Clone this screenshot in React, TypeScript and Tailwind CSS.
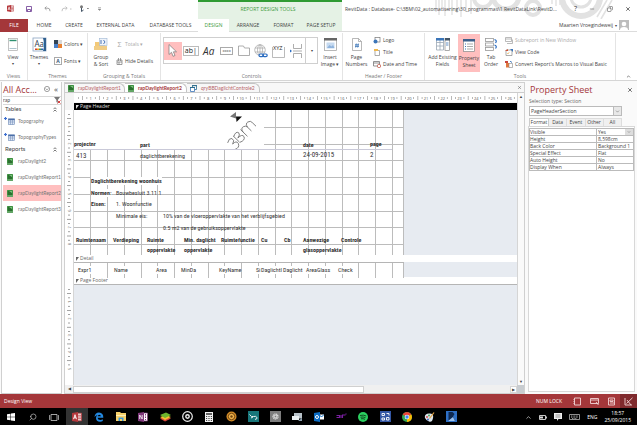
import type { ReactNode } from "react";
import { ChevronUp, ChevronDown, Search, X, Minus, Copy } from "lucide-react";

const STEP = 16.76;

/* ---------- small building blocks ---------- */

function Group({ label, className, children }: { label: string; className: string; children: ReactNode }) {
  return (
    <section className={`flex shrink-0 flex-col border-r border-[#e4e4e4] ${className}`}>
      <div className="flex flex-1 items-start">{children}</div>
      <div className="h-[8px] text-center leading-[8px] text-[#777]">{label}</div>
    </section>
  );
}

function Big({ icon, lines, className = "", arrow = false }: { icon: ReactNode; lines: string[]; className?: string; arrow?: boolean }) {
  return (
    <button className={`flex h-[38px] flex-col items-center whitespace-nowrap pt-[3px] leading-[7px] ${className}`}>
      <span className="mb-[2px] flex h-[16px] items-center">{icon}</span>
      {lines.map((l) => (
        <span key={l}>{l}</span>
      ))}
      {arrow && <span className="text-[4px] leading-[6px]">▾</span>}
    </button>
  );
}

function Small({ icon, text, muted = false }: { icon: ReactNode; text: string; muted?: boolean }) {
  return (
    <button className={`flex h-[12px] items-center gap-[2px] whitespace-nowrap ${muted ? "text-[#aaa]" : ""}`}>
      {icon}
      <span>{text}</span>
    </button>
  );
}

function ReportIcon() {
  return (
    <svg width="6" height="7" viewBox="0 0 6 7" className="shrink-0">
      <rect width="6" height="7" rx="0.5" fill="#3f9142" />
      <rect x="1" y="1" width="4" height="4" fill="#2c7030" />
      <path d="M2 1h3v2z" fill="#7cc47e" />
      <path d="M0 6h6" stroke="#86b988" />
    </svg>
  );
}

function TableIcon() {
  return (
    <svg width="11" height="8" viewBox="0 0 11 8" className="shrink-0">
      <path d="M0 1.5h3M1.5 0v3" stroke="#3d6fd0" strokeWidth="1.2" />
      <rect x="4.5" y="2" width="6" height="5.5" fill="#dce6f5" stroke="#6b87b5" strokeWidth="0.6" />
      <rect x="4.3" y="1.6" width="6.4" height="1.6" fill="#4a6ea8" />
      <path d="M4.5 5h6M6.5 3v4.5M8.5 3v4.5" stroke="#6b87b5" strokeWidth="0.5" />
    </svg>
  );
}

function AccessIcon({ size }: { size: number }) {
  return (
    <svg width={size} height={size} viewBox="0 0 10 10">
      <path d="M5 1.2h4.5v7.6H5z" fill="#fff" stroke="#b5383c" strokeWidth="0.8" />
      <path d="M6 3.2h3M6 5h3M6 6.8h3" stroke="#b5383c" strokeWidth="0.9" />
      <path d="M0 1l6-1v10l-6-1z" fill="#b5383c" />
      <path d="M1.5 7.2L3 2.7l1.5 4.5M2 5.8h2" stroke="#fff" strokeWidth="0.9" fill="none" />
    </svg>
  );
}

/* ---------- title bar ---------- */

function TitleArt() {
  return (
    <svg className="pointer-events-none absolute right-0 top-0" width="220" height="19" viewBox="417 0 220 19" fill="none">
      <g stroke="#e2e2e2">
        <path d="M436 0v12M439 0v15M442 0v9M445 0v16M449 0v11M452 0v15M457 0v13M461 0v17M466 0v12M471 0v14" strokeWidth="1.4" />
        <circle cx="483" cy="-2" r="9" strokeWidth="4" />
        <circle cx="506" cy="-4" r="13" strokeWidth="5" />
        <circle cx="533" cy="8" r="7" strokeWidth="4" />
        <path d="M552 0v4M556 0v6M560 0v5M564 0v7" strokeWidth="1.4" />
        <circle cx="581" cy="-3" r="19" strokeWidth="6" />
        <path d="M581 -3m-10 0a10 10 0 0 0 20 0" strokeWidth="3" />
        <path d="M607 0l-10 17M612 0l-11 19M602 0l-4 8" strokeWidth="1.6" />
      </g>
    </svg>
  );
}

function RibbonTab({ text, className }: { text: string; className: string }) {
  return (
    <button role="tab" className={`h-[13px] shrink-0 whitespace-nowrap text-center ${className}`}>
      {text}
    </button>
  );
}

function Header() {
  return (
    <header className="relative flex h-[32px] border-b border-[#dcdcdc]">
      <TitleArt />
      <div className="w-[198px] shrink-0">
        <div className="flex h-[19px] items-center pb-[2px] pl-[7px]">
          <AccessIcon size={7} />
          <svg className="ml-[12px]" width="6" height="6" viewBox="0 0 6 6" fill="none" stroke="#7b4f9d" strokeWidth="0.9">
            <path d="M.5 .5h5v5h-5zM1.5 5.5v-2h3v2" />
          </svg>
          <svg className="ml-[12px]" width="7" height="6" viewBox="0 0 7 6" fill="none" stroke="#999" strokeWidth="0.9">
            <path d="M2.5 .5L.8 2.2l1.7 1.6M1 2.2h3q2 0 2 3" />
          </svg>
          <svg className="ml-[10px]" width="11" height="6" viewBox="0 0 11 6" fill="none" stroke="#bbb" strokeWidth="0.9">
            <path d="M4.5 .5l1.7 1.7L4.5 3.8M6 2.2h-3q-2 0-2 3M9 3h1.5" />
          </svg>
          <svg className="ml-[7px]" width="10" height="7" viewBox="0 0 10 7" fill="none">
            <circle cx="2.5" cy="1.8" r="1.5" fill="#777" />
            <path d="M2.5 3v3.5l2-1.5" stroke="#456" />
            <path d="M8 3.5h1.8" stroke="#888" />
          </svg>
          <svg className="ml-[9px]" width="3" height="4" viewBox="0 0 3 4"><path d="M0 .5h3M0 2l1.5 1.5L3 2z" stroke="#888" strokeWidth="0.5" fill="#888" /></svg>
        </div>
        <div role="tablist" className="flex">
          <button className="h-[13px] w-[28px] bg-[#a4373a] text-white">FILE</button>
          <RibbonTab text="HOME" className="w-[32px]" />
          <RibbonTab text="CREATE" className="w-[28px]" />
          <RibbonTab text="EXTERNAL DATA" className="w-[55px]" />
          <RibbonTab text="DATABASE TOOLS" className="w-[55px]" />
        </div>
      </div>
      <div className="w-[144px] shrink-0 border-t-2 border-[#2f9b33] bg-[#e5f2e5]">
        <div className="h-[17px] pr-[4px] text-center leading-[14px] text-[#3d9b41]">REPORT DESIGN TOOLS</div>
        <div role="tablist" className="flex">
          <RibbonTab text="DESIGN" className="w-[31px] bg-white text-[#3d9b41]" />
          <RibbonTab text="ARRANGE" className="w-[38px]" />
          <RibbonTab text="FORMAT" className="w-[33px]" />
          <RibbonTab text="PAGE SETUP" className="w-[42px]" />
        </div>
      </div>
      <div className="relative min-w-0 flex-1">
        <div className="flex h-[19px] items-center">
          <div className="w-[218px] truncate pl-[3px]">
            RevitData : Database- C:\3BM\02_automatisering\30_programmas\1 RevitDataLink\RevitD...
          </div>
          <div className="ml-auto flex items-center gap-[12px] pb-[2px] pr-[6px] text-[#444]">
            <button aria-label="Help" className="text-[7px]">?</button>
            <button aria-label="Minimize"><Minus size={6} /></button>
            <button aria-label="Restore"><Copy size={6} className="-scale-x-100" /></button>
            <button aria-label="Close"><X size={6} strokeWidth={3} /></button>
          </div>
        </div>
        <div className="flex h-[12px] items-center justify-end gap-[2px] pr-[8px]">
          <span>Maarten Vroegindeweij</span>
          <span className="text-[4px]">▾</span>
          <svg width="10" height="10" viewBox="0 0 10 10">
            <rect width="10" height="10" fill="#bdbdbd" />
            <circle cx="5" cy="4" r="2.3" fill="#fff" />
            <path d="M1 10q0-3 4-3t4 3z" fill="#fff" />
          </svg>
        </div>
      </div>
    </header>
  );
}

/* ---------- ribbon ---------- */

function Tool({ label, className = "w-[18px]", children }: { label: string; className?: string; children: ReactNode }) {
  return (
    <button aria-label={label} className={`flex h-[18px] items-center justify-center ${className}`}>
      {children}
    </button>
  );
}

function Ribbon() {
  return (
    <div className="flex h-[49px] border-b border-[#d5d5d5] pt-[1px] leading-[7px]">
      <Group label="Views" className="w-[28px]">
        <Big
          className="w-[26px]"
          arrow
          lines={["View"]}
          icon={
            <svg width="10" height="13" viewBox="0 0 10 13" fill="#fff">
              <rect x=".5" y=".5" width="9" height="12" stroke="#aaa" strokeWidth="0.7" />
              <path d="M1.5 2.5h7" stroke="#2f9070" strokeWidth="1.4" />
              <path d="M1.5 10.5h7" stroke="#8ab" strokeWidth="0.7" />
            </svg>
          }
        />
      </Group>
      <Group label="Themes" className="w-[60px]">
        <Big
          className="w-[22px]"
          arrow
          lines={["Themes"]}
          icon={
            <svg width="15" height="15" viewBox="0 0 15 15" fill="none">
              <rect x="1" y="1" width="13" height="13" fill="#fff" stroke="#8aa4c0" strokeWidth="0.8" />
              <path d="M11 1h3v13h-3q2-6 0-13z" fill="#2f5f8f" />
              <text x="2.5" y="9.5" fontSize="8" fill="#345" className="font-[Noto_Sans]">Aa</text>
              <path d="M3 12.2h2" stroke="#d04030" strokeWidth="1.5" /><path d="M5 12.2h2" stroke="#f0a020" strokeWidth="1.5" /><path d="M7 12.2h2" stroke="#40a050" strokeWidth="1.5" /><path d="M9 12.2h2" stroke="#3060b0" strokeWidth="1.5" />
            </svg>
          }
        />
        <div className="flex flex-col gap-[5px] pl-[4px] pt-[5px]">
          <Small
            text="Colors ▾"
            icon={
              <svg width="8" height="8" viewBox="0 0 8 8"><rect width="4" height="4" fill="#345" /><rect x="4" width="4" height="4" fill="#d8d8d8" /><rect y="4" width="4" height="4" fill="#4a80c8" /><rect x="4" y="4" width="4" height="4" fill="#e88030" /></svg>
            }
          />
          <Small text="Fonts ▾" icon={<span className="flex h-[8px] w-[8px] items-center justify-center border border-[#aaa] font-bold text-[#357]">A</span>} />
        </div>
      </Group>
      <Group label="Grouping & Totals" className="w-[73px]">
        <Big
          className="w-[26px]"
          lines={["Group", "& Sort"]}
          icon={
            <svg width="14" height="13" viewBox="0 0 14 13">
              <path d="M1 4h4l1 1h5v3H1z" fill="#f3c978" /><path d="M0 8h13v4H0z" fill="#f1cd85" />
              <rect x="5.5" y=".5" width="7.5" height="7" fill="#eef3fa" stroke="#9db4d3" strokeWidth="0.6" />
              <path d="M7 2v4M9.5 2l1.5 2-1.5 2" stroke="#3b69b0" strokeWidth="0.9" fill="none" />
            </svg>
          }
        />
        <div className="flex flex-col gap-[5px] pl-[2px] pt-[5px]">
          <Small muted text="Totals ▾" icon={<span className="w-[7px] text-[7px]">Σ</span>} />
          <Small
            text="Hide Details"
            icon={<svg width="7" height="7" viewBox="0 0 7 7" fill="none" stroke="#777" strokeWidth="0.7"><path d="M1 2h5v4.5H1zM1 4h5M2.5 0v3M4.5 0v3M3 4v2.5" /></svg>}
          />
        </div>
      </Group>
      <Group label="Controls" className="w-[182px]">
        <div className="ml-[2px] mt-[4px] flex h-[27px] w-[155px] items-center border border-[#cfcfcf]">
          <Tool label="Select" className="w-[18px] bg-[#ffbfbf]">
            <svg width="9" height="13" viewBox="0 0 9 13"><path d="M1 .5v10l2.5-2.2 1.5 4 2-.8-1.6-3.7H8.5z" fill="#fff" stroke="#777" strokeWidth="0.7" /></svg>
          </Tool>
          <Tool label="Text Box">
            <span className="border border-[#bbb] px-[1px] text-[7px] leading-[8px] text-[#222]">ab|</span>
          </Tool>
          <Tool label="Label">
            <span className="text-[10px] italic leading-[10px] text-[#333]">Aa</span>
          </Tool>
          <Tool label="Button">
            <span className="border border-[#aaa] px-[1px] text-[4px] leading-[6px]">xxxx</span>
          </Tool>
          <Tool label="Tab Control" className="w-[17px]">
            <svg width="12" height="11" viewBox="0 0 12 11" fill="none" stroke="#999" strokeWidth="0.8"><path d="M.5 10.5V1h5l1 2h5v7.5z" /></svg>
          </Tool>
          <Tool label="Hyperlink">
            <svg width="14" height="14" viewBox="0 0 14 14" fill="none" stroke="#999" strokeWidth="0.6">
              <circle cx="6" cy="6" r="5.3" /><ellipse cx="6" cy="6" rx="2.5" ry="5.3" /><path d="M1 4h10M1 8h10M6 1v10" />
              <g stroke="#2b6cc0" strokeWidth="1.2"><rect x="5" y="10" width="4.5" height="2.6" rx="1.3" fill="#fff" /><rect x="8.7" y="10" width="4.5" height="2.6" rx="1.3" /></g>
            </svg>
          </Tool>
          <Tool label="Navigation Control" className="w-[17px]">
            <svg width="13" height="14" viewBox="0 0 13 14" fill="none">
              <path d="M.5 3v10.5h12V3" stroke="#aaa" strokeWidth="0.8" />
              <text x="1" y="6" fontSize="5.5" fill="#333" className="font-[Noto_Sans]">XYZ</text>
            </svg>
          </Tool>
          <Tool label="Page Break">
            <svg width="13" height="14" viewBox="0 0 13 14" fill="none" stroke="#999" strokeWidth="0.8">
              <path d="M3.5 0v4.5h8V0M3.5 14V9.5h8V14M3 7h9" /><path d="M0 5.5L2 7 0 8.5z" fill="#2b6cc0" stroke="none" />
            </svg>
          </Tool>
          <button aria-label="More controls" className="ml-auto h-full w-[12px] border-l border-[#cfcfcf] text-[4px]">▾</button>
        </div>
        <Big
          className="w-[24px]"
          lines={["Insert", "Image ▾"]}
          icon={
            <svg width="13" height="13" viewBox="0 0 13 13"><rect x=".5" y=".5" width="12" height="12" fill="#fff" stroke="#999" strokeWidth="0.7" /><path d="M0 0h13v2.5H0z" fill="#666" /><rect x="2.5" y="4.5" width="8" height="6" fill="#c6daf0" /><path d="M3 10l2.5-3 2 1.5L9 7l1.5 3z" fill="#8fb3dc" /></svg>
          }
        />
      </Group>
      <Group label="Header / Footer" className="w-[82px]">
        <Big
          className="w-[27px]"
          lines={["Page", "Numbers"]}
          icon={
            <svg width="10" height="13" viewBox="0 0 10 13" fill="none"><path d="M.5.5h6l3 3v9h-9z" fill="#fff" stroke="#999" strokeWidth="0.7" /><path d="M6.5.5v3h3" stroke="#999" strokeWidth="0.7" /><path d="M4.3 5.5l-.6 4M6.3 5.5l-.6 4M3 6.8h4M3 8.4h4" stroke="#3b75b8" strokeWidth="0.8" /></svg>
          }
        />
        <div className="flex flex-col pl-[3px] pt-[1px]">
          <Small text="Logo" icon={<svg width="8" height="7" viewBox="0 0 8 7" fill="none"><rect x="2" y=".5" width="5" height="4.5" stroke="#777" strokeWidth="0.7" /><circle cx="2.5" cy="4.5" r="2" fill="#3b75b8" /></svg>} />
          <Small text="Title" icon={<svg width="8" height="7" viewBox="0 0 8 7" fill="none"><path d="M2 1.5h4.5v5H2z" fill="#fff" stroke="#888" strokeWidth="0.7" /><path d="M1 0h4v2H1z" fill="#f0b84c" /></svg>} />
          <Small text="Date and Time" icon={<svg width="8" height="7" viewBox="0 0 8 7" fill="none"><path d="M.5.5h6v4.5h-6zM.5 2h6" stroke="#777" strokeWidth="0.8" /><circle cx="6" cy="5" r="1.7" fill="#fff" stroke="#c05040" strokeWidth="0.7" /></svg>} />
        </div>
      </Group>
      <Group label="Tools" className="w-[191px]">
        <Big
          className="ml-[2px] w-[31px]"
          lines={["Add Existing", "Fields"]}
          icon={
            <svg width="14" height="13" viewBox="0 0 14 13" fill="none"><path d="M.5 1h7v11h-7zM4 1v11M.5 4.5h7M.5 8h7" stroke="#9aa7b5" strokeWidth="0.8" /><path d="M0 0h8v2.5H0z" fill="#3b75b8" /><rect x="9" y=".5" width="4.5" height="12" fill="#fff" stroke="#888" strokeWidth="0.7" /><path d="M9 0h5v2.5H9z" fill="#456" /><path d="M10 5h2.5M10 7h2.5" stroke="#3b75b8" strokeWidth="0.8" /></svg>
          }
        />
        <Big
          className="mt-[1px] w-[22px] bg-[#ffbfbf]"
          lines={["Property", "Sheet"]}
          icon={
            <svg width="12" height="13" viewBox="0 0 12 13" fill="none"><rect x=".5" y=".5" width="11" height="12" fill="#fff" stroke="#888" strokeWidth="0.7" /><path d="M0 0h12v2.5H0z" fill="#3b5f8a" /><path d="M2 5h1M2 7.5h1M2 10h1" stroke="#3b75b8" /><path d="M4 5h6M4 7.5h6M4 10h6" stroke="#888" strokeWidth="0.7" /></svg>
          }
        />
        <Big
          className="w-[22px]"
          lines={["Tab", "Order"]}
          icon={
            <svg width="13" height="13" viewBox="0 0 13 13" fill="none" stroke="#999" strokeWidth="0.8"><rect x=".5" y=".5" width="8" height="3" /><rect x=".5" y="5" width="8" height="3" /><rect x=".5" y="9.5" width="8" height="3" /><path d="M9.5 1.5q3 1 1 3.5M9.5 7q3 1 1 3.5" stroke="#2b6cc0" strokeWidth="1.2" /></svg>
          }
        />
        <div className="flex flex-col pl-[3px] pt-[1px]">
          <Small muted text="Subreport in New Window" icon={<svg width="8" height="7" viewBox="0 0 8 7" fill="none" stroke="#aaa" strokeWidth="0.8"><path d="M.5.5h6v4h-6zM2 6.5h5.5v-4M.5 2h6" /></svg>} />
          <Small text="View Code" icon={<svg width="8" height="7" viewBox="0 0 8 7" fill="none"><path d="M1 1h6v5.5H1z" stroke="#888" strokeWidth="0.7" /><path d="M0 2h3V0z" fill="#d05030" /><path d="M5 0h3v3z" fill="#3b75b8" /><path d="M2.5 5l1.5-1.5" stroke="#e0a030" /></svg>} />
          <Small text="Convert Report's Macros to Visual Basic" icon={<svg width="8" height="7" viewBox="0 0 8 7" fill="none"><path d="M1 2h3.5v4.5H1z" fill="#e2783c" /><path d="M4 2.5h3.5v4H4z" fill="#fff" stroke="#888" strokeWidth="0.6" /><path d="M0 0h3v2H0z" fill="#c9463d" /><path d="M5 0l2 1.5" stroke="#3b75b8" /></svg>} />
        </div>
      </Group>
      <button aria-label="Collapse the ribbon" className="ml-auto mr-[6px] self-end pb-[1px]">
        <ChevronUp size={5} strokeWidth={3} />
      </button>
    </div>
  );
}

/* ---------- navigation pane ---------- */

function NavHeading({ text }: { text: string }) {
  return (
    <h2 className="flex h-[8px] items-center justify-between px-[2px] text-[6px] leading-[8px] text-[#444]">
      {text}
      <svg className="mr-[2px]" width="4" height="5" viewBox="0 0 4 5" fill="none" stroke="#555" strokeWidth="0.8"><path d="M.5 2.2L2 .7l1.5 1.500M.5 4.500L2 3l1.500 1.500" /></svg>
    </h2>
  );
}

function NavItem({ text, icon, selected = false }: { text: string; icon: ReactNode; selected?: boolean }) {
  return (
    <li>
      <button className={`flex h-[16px] w-full items-center whitespace-nowrap text-left text-[#777] ${selected ? "bg-[#ffbfbf]" : ""}`}>
        <span className="flex w-[15px] shrink-0 pl-[1px]">{icon}</span>
        {text}
      </button>
    </li>
  );
}

function Navigation() {
  const report = <span className="pl-[3px]"><ReportIcon /></span>;
  return (
    <nav className="w-[61px] shrink-0 border-x border-b border-[#d0d0d0] bg-white pl-[1px] font-['Lato','Noto_Sans',sans-serif]">
      <div className="flex h-[14px] items-center font-['Open_Sans','Noto_Sans',sans-serif]">
        <h1 className="whitespace-nowrap text-[9px] text-[#a4373a]">All Acc...</h1>
        <svg className="ml-auto" width="6" height="6" viewBox="0 0 6 6" fill="none" stroke="#777" strokeWidth="0.7"><circle cx="3" cy="3" r="2.6" /><path d="M1.7 2.5L3 3.9l1.3-1.4" /></svg>
        <span className="pl-[4px] pr-[3px] text-[8px] leading-[8px]">«</span>
      </div>
      <div className="flex h-[9px] items-center border-y border-[#d8d8d8]">
        <input aria-label="Search" defaultValue="rap" className="min-w-0 flex-1 bg-transparent outline-none" />
        <svg width="7" height="7" viewBox="0 0 7 7"><path d="M0 0h6L3.8 3v3L2.4 5V3z" fill="#777" /><path d="M3.5 3.5l3 3M6.5 3.5l-3 3" stroke="#d03030" strokeWidth="0.9" /></svg>
      </div>
      <NavHeading text="Tables" />
      <ul>
        <NavItem text="Topography" icon={<TableIcon />} />
        <NavItem text="TopographyTypes" icon={<TableIcon />} />
      </ul>
      <NavHeading text="Reports" />
      <ul>
        <NavItem text="rapDaylight2" icon={report} />
        <NavItem text="rapDaylightReport1" icon={report} />
        <NavItem text="rapDaylightReport2" icon={report} selected />
        <NavItem text="rapDaylightReport3" icon={report} />
      </ul>
    </nav>
  );
}

/* ---------- report designer ---------- */

function HorizontalRuler() {
  return (
    <svg className="h-[11px] w-[444px] shrink-0" viewBox="0 0 444 11">
      <rect width="444" height="9" fill="#fff" />
      {Array.from({ length: 27 }, (_, i) => (
        <g key={i}>
          {i > 0 && <text x={i * STEP} y="7" fontSize="4" fill="#555" textAnchor="middle">{i}</text>}
          {[0.25, 0.5, 0.75].map((f) => (
            <rect key={f} x={(i + f) * STEP} y={f === 0.5 ? 3 : 4} width="0.6" height={f === 0.5 ? 4 : 2} fill="#888" />
          ))}
        </g>
      ))}
    </svg>
  );
}

function VerticalRuler({ className, count }: { className: string; count: number }) {
  return (
    <svg className={`block w-[8px] ${className}`} fill="#666">
      {Array.from({ length: count }, (_, i) => (
        <g key={i}>
          <text x="0" y="0" fontSize="4" textAnchor="middle" transform={`translate(5.5 ${(i + 1) * STEP}) rotate(-90)`}>{i + 1}</text>
          {[0.25, 0.5, 0.75].map((f) => (
            <rect key={f} x={f === 0.5 ? 2 : 3} y={(i + f) * STEP} width={f === 0.5 ? 4 : 2} height="0.6" />
          ))}
        </g>
      ))}
    </svg>
  );
}

function Grid({ height, rows }: { height: number; rows: number }) {
  return (
    <svg className="absolute left-0 top-0" width="330" height={height} stroke="#bcbcbc" strokeWidth="1">
      {Array.from({ length: 19 }, (_, i) => (
        <path key={i} d={`M${Math.round((i + 1) * STEP - 0.5) + 0.5} 0V${height}`} />
      ))}
      {Array.from({ length: rows }, (_, i) => (
        <path key={i} d={`M0 ${Math.round((i + 1) * STEP) + 0.5}H330`} />
      ))}
      <path d={`M329.5 0V${height}`} />
    </svg>
  );
}

const headerLabels: [string, string][] = [
  ["projectnr", "left-0 top-[30px] font-bold"],
  ["part", "left-[66px] top-[31px] font-bold"],
  ["date", "left-[229px] top-[31px] font-bold"],
  ["page", "left-[296px] top-[30px] font-bold"],
  ["413", "left-[2px] top-[42px] text-[7px]"],
  ["daglichtberekening", "left-[66px] top-[42px]"],
  ["24-09-2015", "left-[229px] top-[41px] text-[7px]"],
  ["2", "left-[296px] top-[41px] text-[7px]"],
  ["Daglichtberekening woonhuis", "left-[17px] top-[67px] font-bold bg-white"],
  ["Normen:", "left-[17px] top-[79px] font-bold bg-white"],
  ["Bouwbesluit 3.11.1", "left-[42px] top-[79px]"],
  ["Eisen:", "left-[17px] top-[90px] font-bold bg-white"],
  ["1. Woonfunctie", "left-[42px] top-[90px]"],
  ["Minimale eis:", "left-[42px] top-[102px]"],
  ["10% van de vloeroppervlakte van het verblijfsgebied", "left-[89px] top-[102px]"],
  ["0.5 m2 van de gebruiksoppervlakte", "left-[89px] top-[114px]"],
  ["Ruimtenaam", "left-[2px] top-[126px] font-bold"],
  ["Verdieping", "left-[39px] top-[126px] font-bold"],
  ["Ruimte", "left-[73px] top-[126px] font-bold"],
  ["oppervlakte", "left-[73px] top-[136px] font-bold"],
  ["Min. daglicht", "left-[110px] top-[126px] font-bold"],
  ["oppervlakte", "left-[110px] top-[136px] font-bold"],
  ["Ruimtefunctie", "left-[147px] top-[126px] font-bold"],
  ["Cu", "left-[187px] top-[126px] font-bold"],
  ["Cb", "left-[210px] top-[126px] font-bold"],
  ["Aanwezige", "left-[229px] top-[126px] font-bold"],
  ["glasoppervlakte", "left-[229px] top-[136px] font-bold"],
  ["Controle", "left-[267px] top-[126px] font-bold"],
];

const detailFields: [string, string][] = [
  ["Expr1", "left-[4px]"],
  ["Name", "left-[40px]"],
  ["Area", "left-[82px]"],
  ["MinDa", "left-[107px]"],
  ["KeyName", "left-[145px]"],
  ["Si", "left-[182px]"],
  ["DaglichtI", "left-[187px]"],
  ["Daglicht", "left-[209px]"],
  ["AreaGlass", "left-[232px]"],
  ["Check", "left-[264px]"],
];

function DocTab({ text, className, icon }: { text: string; className: string; icon: ReactNode }) {
  return (
    <button role="tab" className={`flex h-[9px] shrink-0 items-center gap-[4px] whitespace-nowrap rounded-tr-[6px] border-r border-t border-[#c4c4c4] pl-[3px] font-['Lato','Noto_Sans',sans-serif] ${className}`}>
      {icon}
      {text}
    </button>
  );
}

function SectionBar({ text, className }: { text: string; className: string }) {
  return (
    <div className={`flex h-[7px] items-center gap-[1px] whitespace-nowrap pl-[1px] leading-[7px] ${className}`}>
      <svg width="4" height="4" viewBox="0 0 4 4"><path d="M1 0h3L1 4z" fill="currentColor" /></svg>
      {text}
    </div>
  );
}

function Designer() {
  return (
    <main className="ml-[2px] flex min-w-0 flex-1 flex-col border border-[#d0d0d0] bg-[#f7f7f7]">
      <div role="tablist" className="flex items-center pr-[2px]">
        <DocTab text="rapDaylightReport1" className="w-[60px] text-[#b86468]" icon={<ReportIcon />} />
        <DocTab text="rapDaylightReport2" className="w-[62px] bg-white font-bold text-[#a4373a]" icon={<ReportIcon />} />
        <DocTab
          text="qryBBDaglichtControle2"
          className="w-[73px] text-[#b86468]"
          icon={<svg width="7" height="7" viewBox="0 0 7 7" fill="#fff"><path d="M2.5.5h4v4h-4z" stroke="#2b6c8c" strokeWidth="0.8" /><path d="M.5 2.5h4v4h-4z" stroke="#3b75b8" strokeWidth="0.8" /><path d="M0 2.5h5M2 .7h5" stroke="#2b6c8c" /></svg>}
        />
        <button aria-label="Close document" className="ml-auto"><X size={5} /></button>
      </div>
      <div className="flex min-h-0 flex-1 border-t border-[#ccc]">
        <div className="w-[9px] shrink-0 bg-[#f4f4f4]">
          <div className="h-[10px]" />
          <div className="border-r border-[#d5d5d5] bg-white">
            <VerticalRuler className="mt-[7px] h-[144px]" count={8} />
            <VerticalRuler className="mt-[8px] h-[15px]" count={0} />
            <VerticalRuler className="mt-[8px] h-[100px]" count={5} />
          </div>
        </div>
        <div className="min-w-0 flex-1 overflow-hidden bg-[#e7ebf1]">
          <div className="flex h-[10px] bg-[#f4f4f4]">
            <HorizontalRuler />
          </div>
          <SectionBar text="Page Header" className="bg-black text-[#ddd]" />
          <div className="font-['Liberation_Sans_Narrow','Roboto_Condensed',Roboto,sans-serif] text-[6px] leading-[8px] text-[#333]">
            <div className="relative h-[145px] w-[330px] bg-white">
              <Grid height={145} rows={8} />
              <div className="absolute left-0 top-0 h-[39px] w-[190px] bg-white" />
              <div className="absolute left-0 top-[39px] h-px w-[318px] bg-[#c9c9d8]" />
              <svg className="absolute left-[153px] top-0" width="34" height="39" viewBox="0 0 34 39" fill="none" stroke="#777" strokeWidth="1">
                <path d="M3 6.500l6-4.500v6.500z" fill="#777" stroke="none" />
                <path d="M9 6.500h6L9.500 12z" fill="#111" stroke="none" />
                <g transform="translate(7 39) rotate(-46) scale(0.88)">
                  <path d="M0 -10q5 -3 7 0q1 4 -4 5q6 0 5 4q-2 5 -8 2" />
                  <path d="M10 -11v10M10 -10q6 -3 7 1q0 3 -5 3.5q7 0 6 4q-2 4 -8 1" />
                  <path d="M21 1v-11M21 -6q1 -5 4.5 -4t3 4v6M28.5 -6q1 -5 4.5 -4t3 4v6" />
                </g>
              </svg>
              {headerLabels.map(([text, place]) => (
                <span key={place} className={`absolute whitespace-nowrap ${place}`}>{text}</span>
              ))}
            </div>
          </div>
          <SectionBar text="Detail" className="bg-white text-[#666]" />
          <div className="relative h-[15px] w-[330px] border-t border-[#b5b5b5] bg-white font-['Liberation_Sans_Narrow','Roboto_Condensed',Roboto,sans-serif] text-[6px] leading-[8px] text-[#333]">
            <Grid height={15} rows={0} />
            {detailFields.map(([text, place]) => (
              <span key={place} className={`absolute top-[3px] whitespace-nowrap bg-white ${place}`}>{text}</span>
            ))}
          </div>
          <SectionBar text="Page Footer" className="bg-white text-[#666]" />
          <div className="h-px bg-[#b5b5b5]" />
        </div>
        <div className="flex w-[7px] shrink-0 flex-col items-center justify-between border-l border-[#d5d5d5] bg-[#fafafa] pt-[1px]">
          <button aria-label="Scroll up" className="text-[4px] leading-[6px]">▲</button>
          <button aria-label="Scroll down" className="text-[4px] leading-[6px]">▼</button>
        </div>
      </div>
      <div className="flex h-[8px] items-center bg-[#f0f0f0]">
        <button aria-label="Scroll left" className="w-[8px] text-[4px] leading-[6px]">◀</button>
        <div className="h-[7px] w-[291px] border border-[#d0d0d0] bg-white" />
        <button aria-label="Scroll right" className="ml-auto w-[7px] border border-[#d5d5d5] bg-white text-[4px] leading-[5px]">▶</button>
        <div className="h-full w-[7px] bg-[#c8ccd0]" />
      </div>
    </main>
  );
}

/* ---------- property sheet ---------- */

const properties = [
  ["Height", "8,598cm"],
  ["Back Color", "Background 1"],
  ["Special Effect", "Flat"],
  ["Auto Height", "No"],
  ["Display When", "Always"],
];

function PropertySheet() {
  return (
    <aside className="ml-[2px] flex w-[110px] shrink-0 flex-col pb-[2px] pl-[1px] pr-[2px]">
      <div className="flex h-[15px] items-end justify-between pl-[2px] pr-[2px]">
        <h1 className="text-[9px] leading-[14px] text-[#a4373a]">Property Sheet</h1>
        <button aria-label="Close property sheet" className="pb-[4px]"><X size={6} strokeWidth={3} /></button>
      </div>
      <label htmlFor="section" className="h-[9px] pl-[1px] leading-[8px] text-[#666]">Selection type: Section</label>
      <div className="relative ml-[1px] w-[93px]">
        <select id="section" className="block h-[10px] w-full appearance-none border border-[#bbb] bg-white px-[1px] leading-[8px] outline-none">
          <option>PageHeaderSection</option>
        </select>
        <span className="pointer-events-none absolute right-0 top-0 flex h-[10px] w-[9px] items-center justify-center border border-[#bbb] bg-[#e8e8e8]"><ChevronDown size={5} /></span>
      </div>
      <div role="tablist" className="ml-[1px] mt-[2px] flex h-[8px] w-[93px] leading-[7px]">
        <button role="tab" className="w-[20px] border border-b-0 border-[#ccc] bg-white">Format</button>
        {["Data", "Event", "Other", "All"].map((t) => (
          <button role="tab" key={t} className="flex-1 border border-b-0 border-l-0 border-[#ddd] bg-[#f0f0f0]">{t}</button>
        ))}
      </div>
      <div className="flex-1 border border-[#d8d8d8] bg-white pt-[1px]">
        <table className="w-full table-fixed border-collapse leading-[6px]">
          <tbody>
            <tr className="h-[7px]">
              <th scope="row" className="w-[67px] border border-[#bbb] p-0 text-left font-normal"><label htmlFor="visible">Visible</label></th>
              <td className="border border-[#bbb] p-0">
                <div className="relative">
                  <select id="visible" className="block h-[6px] w-full appearance-none bg-white pl-[1px] leading-[6px] outline-none"><option>Yes</option></select>
                  <span className="pointer-events-none absolute right-0 top-0 flex h-[6px] w-[8px] items-center justify-center bg-[#ddd]"><ChevronDown size={4} /></span>
                </div>
              </td>
            </tr>
            {properties.map(([name, value]) => (
              <tr key={name} className="h-[7px]">
                <th scope="row" className="border border-[#bbb] p-0 text-left font-normal">{name}</th>
                <td className="whitespace-nowrap border border-[#bbb] p-0 pl-[1px]">{value}</td>
              </tr>
            ))}
          </tbody>
        </table>
      </div>
    </aside>
  );
}

/* ---------- status bar and taskbar ---------- */

function StatusBar() {
  return (
    <footer className="flex h-[14px] items-center bg-[#a4373a] pl-[4px] text-white">
      <span>Design View</span>
      <span className="ml-auto pr-[7px]">NUM LOCK</span>
      <div className="flex h-full items-center text-[#f2d4d5]">
        {[
          ["Report View", "M1.5 1h6v7h-6zM.5 2.5h1M.5 4.5h1M.5 6.5h1"],
          ["Print Preview", "M.5 1.5h8v5h-8zM.5 3h8M6 5l2.5 3"],
          ["Layout View", "M1.5 1h6v7h-6zM3 3h3v1.5H3zM3 6h4"],
          ["Design View", "M1 1v7h7M2.5 6.5L8.5.8M3 3l4 5"],
        ].map(([label, d]) => (
          <button key={label} aria-label={label} className="flex h-full w-[17px] items-center justify-center last:bg-[#7f2a2d]">
            <svg width="9" height="9" viewBox="0 0 9 9" fill="none" stroke="currentColor" strokeWidth="0.9"><path d={d} /></svg>
          </button>
        ))}
      </div>
    </footer>
  );
}

const apps: { name: string; open: boolean; icon: ReactNode }[] = [
  { name: "Access", open: true, icon: <AccessIcon size={10} /> },
  { name: "Edge", open: true, icon: <svg width="10" height="10" viewBox="0 0 10 10"><path d="M.5 5Q1 .8 5 .6 9.5 1 9.3 5.8H3.5q.3 2.2 2.8 2.2 1.5 0 2.5-.7v1.8Q7.5 9.8 6 9.7 2 9.5 2 6q0-2 1.7-3Q1.5 3.5.5 5zM3.7 4.3h3.2Q6.8 2.8 5.3 2.8 4 2.8 3.7 4.3z" fill="#2489e0" /></svg> },
  { name: "File Explorer", open: true, icon: <svg width="10" height="9" viewBox="0 0 10 9"><path d="M0 0h4l1 1h5v8H0z" fill="#f6d06a" /><path d="M0 3h10v1H0z" fill="#fff0b8" /><path d="M2.5 9V5.5h5V9H6V7H4v2z" fill="#3f9ad8" /></svg> },
  { name: "OneNote", open: true, icon: <svg width="10" height="10" viewBox="0 0 10 10"><path d="M5 1h4.5v8H5z" fill="#fff" stroke="#80397b" strokeWidth="0.7" /><path d="M7.5 2v6" stroke="#80397b" strokeDasharray="1.5 1" /><path d="M0 1l6-1v10l-6-1z" fill="#80397b" /><path d="M1.7 7V3l2.5 4V3" stroke="#fff" strokeWidth="0.8" fill="none" /></svg> },
  { name: "BlueStacks", open: false, icon: <svg width="11" height="10" viewBox="0 0 11 10"><path d="M0 6.5L5 9.5l6-3-5-2z" fill="#d8473c" /><path d="M0 5L5 8l6-3-5-2z" fill="#f0c030" /><path d="M0 3L5 6l6-3-5-2.5z" fill="#6cb52d" /></svg> },
  { name: "Disc Player", open: false, icon: <svg width="11" height="11" viewBox="0 0 11 11" fill="none" stroke="#eee"><circle cx="5.5" cy="5.5" r="4.8" strokeWidth="1.2" /><circle cx="5.5" cy="5.5" r="1.7" strokeWidth="1.4" /></svg> },
  { name: "Calculator", open: true, icon: <svg width="8" height="10" viewBox="0 0 8 10"><rect width="8" height="10" fill="#f2f2f2" /><path d="M1 2h6" stroke="#333" strokeWidth="1.5" /><path d="M1 4.5h6M1 6.5h6M1 8.5h6" stroke="#444" strokeWidth="1" strokeDasharray="1.2 1.2" /></svg> },
  { name: "Wheel", open: false, icon: <svg width="11" height="11" viewBox="0 0 11 11"><circle cx="5.5" cy="5.5" r="5" fill="#d18a26" /><circle cx="5.5" cy="5.5" r="3.2" fill="#f1b64f" stroke="#704410" /><circle cx="5.5" cy="5.5" r="1.2" fill="#704410" /></svg> },
  { name: "Modeller", open: false, icon: <svg width="11" height="11" viewBox="0 0 11 11" fill="none" stroke="#fff"><rect width="11" height="11" fill="#18767a" stroke="none" /><path d="M1.5 3.5q2 3 4 2t4 1.5M3 7l2-1M7 8.5l2-1" strokeWidth="0.9" /></svg> },
  { name: "Settings", open: false, icon: <svg width="11" height="11" viewBox="0 0 11 11" fill="none"><rect width="11" height="11" fill="#7d7d7d" /><circle cx="5.5" cy="5.5" r="2.5" stroke="#eee" strokeWidth="1.1" strokeDasharray="1.2 .5" /><circle cx="5.5" cy="5.5" r="1.3" stroke="#eee" /></svg> },
  { name: "Remote", open: false, icon: <svg width="11" height="10" viewBox="0 0 11 10"><path d="M2 1h8v5.5H2z" fill="#b8c2ca" /><path d="M0 4h7v4H0z" fill="#e8edf0" /><path d="M6 9l4-3v3z" fill="#8ea2b2" /></svg> },
  { name: "Outlook", open: true, icon: <svg width="10" height="10" viewBox="0 0 10 10"><path d="M5 2.5h5v5H5z" fill="#fff" /><path d="M5 2.5l2.5 2.5L10 2.5" stroke="#0a6cc4" fill="none" /><path d="M0 1l6-1v10l-6-1z" fill="#0a6cc4" /><circle cx="3" cy="5" r="1.5" stroke="#fff" fill="none" /></svg> },
  { name: "Monitor", open: true, icon: <svg width="11" height="9" viewBox="0 0 11 9" fill="none" stroke="#7b1fa2" strokeWidth="1.1"><path d="M.5 3.5h3v2h-3M5 3v3M6.5 6V3h3M10 1.5v1" /></svg> },
  { name: "Spotify", open: true, icon: <svg width="10" height="10" viewBox="0 0 10 10" fill="none" stroke="#0b2b12"><circle cx="5" cy="5" r="5" fill="#2bd060" stroke="none" /><path d="M2 3.5q3.5-1 6.2.5M2.5 5.2q2.8-.7 5 .5M3 6.8q2-.5 4 .5" strokeWidth="0.8" /></svg> },
  { name: "Planner", open: false, icon: <svg width="11" height="11" viewBox="0 0 11 11" fill="none" stroke="#fff" strokeWidth="0.9"><rect width="11" height="11" fill="#3457a4" stroke="none" /><path d="M2 2.5h2.5v2H2zM6.5 2.5H9M2 7h2.5v2H2zM6.5 6.5H9v2.5H6.5zM9 2.5v2" /></svg> },
  { name: "Chrome", open: true, icon: <svg width="10" height="10" viewBox="0 0 10 10"><circle cx="5" cy="5" r="5" fill="#34a853" /><path d="M.7 2.5A5 5 0 0 1 9.3 2.5L5 5z" fill="#ea4335" /><path d="M9.3 2.5A5 5 0 0 1 5 10l0-5z" fill="#fbbc05" /><circle cx="5" cy="5" r="2.3" fill="#fff" /><circle cx="5" cy="5" r="1.7" fill="#4285f4" /></svg> },
  { name: "Paint", open: true, icon: <svg width="11" height="10" viewBox="0 0 11 10"><path d="M1 6Q0 2 5 1.5T9 6 5 9.5 1 6z" fill="#dce6ee" /><circle cx="3" cy="5" r=".9" fill="#d04040" /><circle cx="5" cy="3.5" r=".9" fill="#40a050" /><circle cx="4" cy="7.5" r=".9" fill="#3060c0" /><path d="M5.5 6.5L10 .5" stroke="#e0a040" strokeWidth="1.2" /></svg> },
  { name: "Revit", open: true, icon: <svg width="11" height="11" viewBox="0 0 11 11"><rect width="11" height="11" fill="#2e6fc4" /><path d="M2.5 10V1h4l2 2-1.5 2.5L9 10H6L5 7v3z" fill="#0e2950" /><path d="M2 10l5-4 2 4z" fill="#9cc2ee" /></svg> },
];

function TaskButton({ name, className = "", children }: { name: string; className?: string; children: ReactNode }) {
  return (
    <button aria-label={name} className={`flex h-full w-[22px] shrink-0 items-center justify-center ${className}`}>
      {children}
    </button>
  );
}

function Taskbar() {
  return (
    <div className="flex h-[18px] items-center bg-black text-white">
      <TaskButton name="Start">
        <svg width="8" height="8" viewBox="0 0 8 8" fill="#fff"><path d="M0 1.2l3.5-.5v3H0zM4 .6L8 0v3.7H4zM0 4.2h3.5v3L0 6.7zM4 4.2h4V8l-4-.6z" /></svg>
      </TaskButton>
      <TaskButton name="Search"><Search size={8} className="-scale-x-100 text-[#ccc]" /></TaskButton>
      <TaskButton name="Task View" className="pr-[2px]">
        <svg width="10" height="7" viewBox="0 0 10 7" fill="none" stroke="#ccc" strokeWidth="0.8"><path d="M2 .5h6v6H2zM1 1.5H.4v4H1M9 1.5h.6v4H9" /></svg>
      </TaskButton>
      {apps.map((a, i) => (
        <TaskButton key={a.name} name={a.name} className={i === 0 ? "bg-[#333]" : ""}>
          <span className="flex h-full w-[18px] flex-col items-center">
            <span className="flex flex-1 items-center">{a.icon}</span>
            <span className={`h-px w-full ${a.open ? "bg-[#e6e6e6]" : ""}`} />
          </span>
        </TaskButton>
      ))}
      <div className="ml-auto flex shrink-0 items-center gap-[7px] pr-[6px]">
        <ChevronUp size={7} />
        <svg width="8" height="5" viewBox="0 0 8 5" fill="none" stroke="#ddd" strokeWidth="0.9"><path d="M.5.5h6v4h-6zM7.5 1.5v2" /><path d="M1 2.5h3" strokeWidth="2" /></svg>
        <svg width="8" height="8" viewBox="0 0 8 8"><path d="M0 0h8v6H4.5L3 8V6H0z" fill="#eee" /><path d="M1.5 2h5M1.5 4h5" stroke="#555" strokeWidth="0.6" /></svg>
        <svg width="11" height="6" viewBox="0 0 11 6" fill="none" stroke="#ccc" strokeWidth="0.7"><path d="M.5.5h10v5H.5z" /><path d="M2 2h7M2 3.2h7M3 4.5h5" strokeDasharray="1 .6" /></svg>
        <span>ENG</span>
        <div className="text-center leading-[7px]">
          <div>18:57</div>
          <div>25/09/2015</div>
        </div>
      </div>
    </div>
  );
}

export default function App() {
  return (
    <div className="min-h-screen w-full bg-white pr-[3px]">
      <div className="flex min-h-screen flex-col overflow-hidden bg-white font-['Open_Sans','Noto_Sans',sans-serif] text-[5px] leading-[7px] text-[#444]">
        <Header />
        <Ribbon />
        <div className="flex flex-1 bg-[#fafafa] pl-[1px] pt-px">
          <Navigation />
          <Designer />
          <PropertySheet />
        </div>
        <StatusBar />
        <Taskbar />
      </div>
    </div>
  );
}
